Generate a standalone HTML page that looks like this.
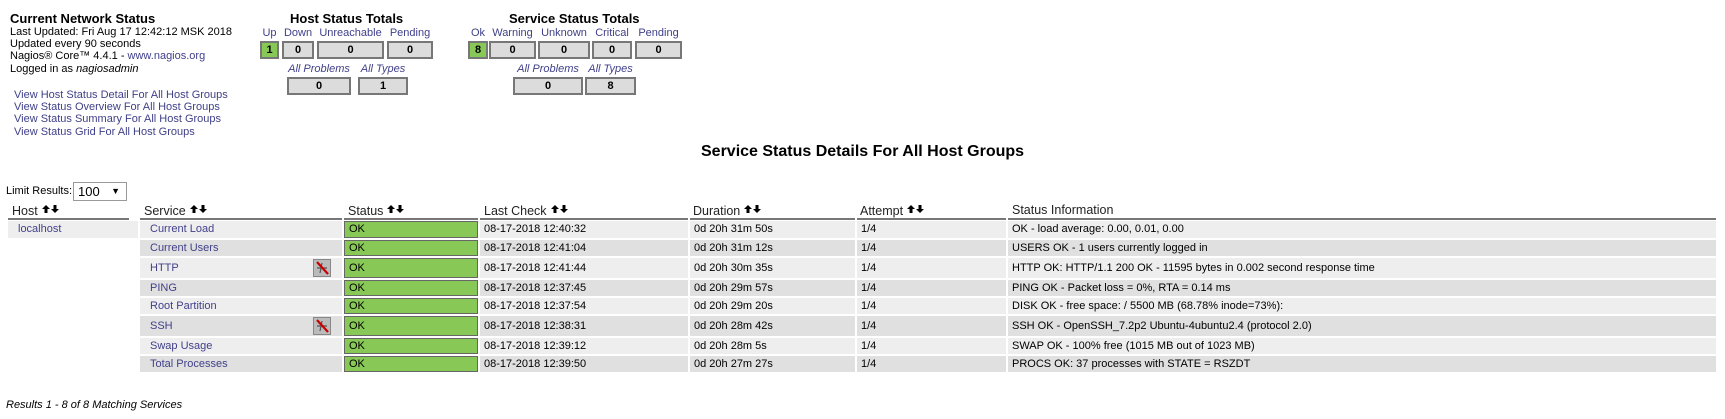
<!DOCTYPE html>
<html><head><meta charset="utf-8"><style>
*{margin:0;padding:0;box-sizing:border-box}
body{width:1725px;height:419px;background:#fff;font-family:"Liberation Sans",Arial,sans-serif;color:#000;position:relative;overflow:hidden;font-size:11px}
.a{position:absolute;white-space:nowrap}
.t{font-weight:bold;font-size:13px}
.lk{color:#40408a}
.box{position:absolute;height:18px;background:#dcdcdc;border:2px solid #777;text-align:center;font-size:11px;font-weight:bold;line-height:14px}
.box.g{background:#88c857}
.lbl{position:absolute;color:#40408a;font-size:11px;text-align:center}
.hd{position:absolute;font-size:12.5px;color:#222;top:204px}
.ul{position:absolute;top:218px;height:2px;background:#777}
.c{position:absolute;line-height:16px;padding-left:4px;font-size:11px}
.ok{position:absolute;background:#88c857;border:1px solid #666;padding-left:4px;font-size:11px}
.ar{display:inline-block;vertical-align:2px;margin-left:4px}
</style></head><body>
<div class="a t" style="left:10px;top:11px">Current Network Status</div>
<div class="a" style="left:10px;top:26px;line-height:12.2px">Last Updated: Fri Aug 17 12:42:12 MSK 2018<br>Updated every 90 seconds<br>Nagios® Core™ 4.4.1 - <span class="lk">www.nagios.org</span><br>Logged in as <i>nagiosadmin</i></div>
<div class="a lk" style="left:14px;top:89px;line-height:12.2px">View Host Status Detail For All Host Groups<br>View Status Overview For All Host Groups<br>View Status Summary For All Host Groups<br>View Status Grid For All Host Groups</div>

<div class="a t" style="left:290px;top:11px">Host Status Totals</div>
<div class="lbl" style="left:260px;top:27px;width:19px">Up</div>
<div class="lbl" style="left:282px;top:27px;width:32px">Down</div>
<div class="lbl" style="left:317px;top:27px;width:67px">Unreachable</div>
<div class="lbl" style="left:387px;top:27px;width:46px">Pending</div>
<div class="box g" style="left:260px;top:41px;width:19px">1</div>
<div class="box" style="left:282px;top:41px;width:32px">0</div>
<div class="box" style="left:317px;top:41px;width:67px">0</div>
<div class="box" style="left:387px;top:41px;width:46px">0</div>
<div class="lbl" style="left:287px;top:63px;width:64px;font-style:italic">All Problems</div>
<div class="lbl" style="left:358px;top:63px;width:50px;font-style:italic">All Types</div>
<div class="box" style="left:287px;top:77px;width:64px">0</div>
<div class="box" style="left:358px;top:77px;width:50px">1</div>

<div class="a t" style="left:509px;top:11px">Service Status Totals</div>
<div class="lbl" style="left:468px;top:27px;width:20px">Ok</div>
<div class="lbl" style="left:489px;top:27px;width:47px">Warning</div>
<div class="lbl" style="left:538px;top:27px;width:52px">Unknown</div>
<div class="lbl" style="left:592px;top:27px;width:40px">Critical</div>
<div class="lbl" style="left:635px;top:27px;width:47px">Pending</div>
<div class="box g" style="left:468px;top:41px;width:20px">8</div>
<div class="box" style="left:489px;top:41px;width:47px">0</div>
<div class="box" style="left:538px;top:41px;width:52px">0</div>
<div class="box" style="left:592px;top:41px;width:40px">0</div>
<div class="box" style="left:635px;top:41px;width:47px">0</div>
<div class="lbl" style="left:513px;top:63px;width:70px;font-style:italic">All Problems</div>
<div class="lbl" style="left:585px;top:63px;width:51px;font-style:italic">All Types</div>
<div class="box" style="left:513px;top:77px;width:70px">0</div>
<div class="box" style="left:585px;top:77px;width:51px">8</div>

<div class="a" style="left:701px;top:143px;font-size:16px;font-weight:bold">Service Status Details For All Host Groups</div>

<div class="a" style="left:6px;top:185px">Limit Results:</div>
<div class="a" style="left:73px;top:182px;width:54px;height:19px;border:1px solid #999;font-size:13px;padding-left:4px;line-height:17px">100<span style="position:absolute;right:6px;font-size:9px">▼</span></div>

<svg width="0" height="0" style="position:absolute"><defs><g id="ar"><path d="M4 0L8 4H5.5V8H2.5V4H0Z M13 8L9 4H11.5V0H14.5V4H17Z" fill="#000"/></g></defs></svg>
<div class="hd" style="left:12px">Host<svg class="ar" width="17" height="8"><use href="#ar"/></svg></div>
<div class="hd" style="left:144px">Service<svg class="ar" width="17" height="8"><use href="#ar"/></svg></div>
<div class="hd" style="left:348px">Status<svg class="ar" width="17" height="8"><use href="#ar"/></svg></div>
<div class="hd" style="left:484px">Last Check<svg class="ar" width="17" height="8"><use href="#ar"/></svg></div>
<div class="hd" style="left:693px">Duration<svg class="ar" width="17" height="8"><use href="#ar"/></svg></div>
<div class="hd" style="left:860px">Attempt<svg class="ar" width="17" height="8"><use href="#ar"/></svg></div>
<div class="hd" style="left:1012px;top:203px">Status Information</div>
<div class="ul" style="left:8px;width:121px"></div>
<div class="ul" style="left:140px;width:202px"></div>
<div class="ul" style="left:344px;width:134px"></div>
<div class="ul" style="left:480px;width:208px"></div>
<div class="ul" style="left:690px;width:165px"></div>
<div class="ul" style="left:857px;width:149px"></div>
<div class="ul" style="left:1008px;width:708px"></div>

<div class="c lk" style="left:8px;top:221px;width:130px;height:17px;background:#efeeee;padding-left:10px">localhost</div>

<div id="rows"></div>
<script>
var R=[["Current Load","08-17-2018 12:40:32","0d 20h 31m 50s","OK - load average: 0.00, 0.01, 0.00",221,17,0],
["Current Users","08-17-2018 12:41:04","0d 20h 31m 12s","USERS OK - 1 users currently logged in",240,16,0],
["HTTP","08-17-2018 12:41:44","0d 20h 30m 35s","HTTP OK: HTTP/1.1 200 OK - 11595 bytes in 0.002 second response time",258,20,1],
["PING","08-17-2018 12:37:45","0d 20h 29m 57s","PING OK - Packet loss = 0%, RTA = 0.14 ms",280,16,0],
["Root Partition","08-17-2018 12:37:54","0d 20h 29m 20s","DISK OK - free space: / 5500 MB (68.78% inode=73%):",298,16,0],
["SSH","08-17-2018 12:38:31","0d 20h 28m 42s","SSH OK - OpenSSH_7.2p2 Ubuntu-4ubuntu2.4 (protocol 2.0)",316,20,1],
["Swap Usage","08-17-2018 12:39:12","0d 20h 28m 5s","SWAP OK - 100% free (1015 MB out of 1023 MB)",338,16,0],
["Total Processes","08-17-2018 12:39:50","0d 20h 27m 27s","PROCS OK: 37 processes with STATE = RSZDT",356,16,0]];
var h="";
R.forEach(function(r,i){var bg=i%2?"#e0e0e0":"#efeeee",t=r[4],H=r[5],lh="line-height:"+H+"px;";
h+='<div class="c lk" style="left:140px;top:'+t+'px;width:202px;height:'+H+'px;background:'+bg+';padding-left:10px;'+lh+'">'+r[0]+'</div>';
if(r[6])h+='<svg style="position:absolute;left:313px;top:'+(t+1)+'px" width="18" height="18"><rect x="0.5" y="0.5" width="17" height="17" fill="#bbb" stroke="#888"/><path d="M5 5L13 13M9 4L7 14M4 9L14 9" stroke="#555" stroke-width="1.2"/><path d="M4 3L15 15" stroke="#c00" stroke-width="2.2"/></svg>';
h+='<div class="ok" style="left:344px;top:'+t+'px;width:134px;height:'+H+'px;line-height:'+(H-2)+'px">OK</div>';
h+='<div class="c" style="left:480px;top:'+t+'px;width:208px;height:'+H+'px;background:'+bg+';'+lh+'">'+r[1]+'</div>';
h+='<div class="c" style="left:690px;top:'+t+'px;width:165px;height:'+H+'px;background:'+bg+';'+lh+'">'+r[2]+'</div>';
h+='<div class="c" style="left:857px;top:'+t+'px;width:149px;height:'+H+'px;background:'+bg+';'+lh+'">1/4</div>';
h+='<div class="c" style="left:1008px;top:'+t+'px;width:708px;height:'+H+'px;background:'+bg+';'+lh+'">'+r[3]+'</div>';});
document.getElementById("rows").innerHTML=h;
</script>
<div class="a" style="left:6px;top:399px;font-style:italic">Results 1 - 8 of 8 Matching Services</div>
</body></html>
